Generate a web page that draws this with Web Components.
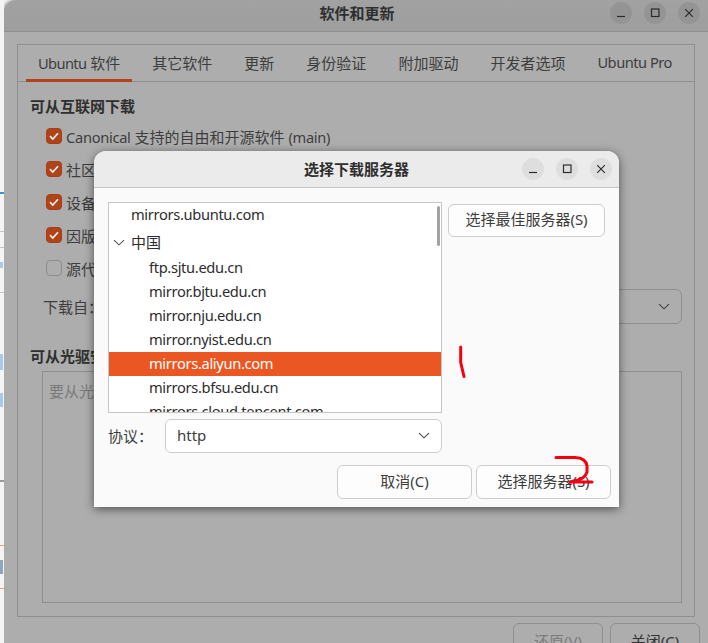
<!DOCTYPE html>
<html>
<head>
<meta charset="utf-8">
<title>软件和更新</title>
<style>
  html, body { margin: 0; height: 643px; overflow: hidden; background: #f4f4f4; }
  body { font: 15px "Noto Sans", "Noto Sans CJK SC", sans-serif; color: #3d3d3d; }
</style>
</head>
<body>

<desktop-screen>
  <main-window>
    <tab-bar>
      <tab-item active><lat-text narrow>Ubuntu</lat-text> 软件</tab-item>
      <tab-item>其它软件</tab-item>
      <tab-item>更新</tab-item>
      <tab-item>身份验证</tab-item>
      <tab-item>附加驱动</tab-item>
      <tab-item>开发者选项</tab-item>
      <tab-item><lat-text tight>Ubuntu Pro</lat-text></tab-item>
    </tab-bar>
    <section-title>可从互联网下载</section-title>
    <check-row checked><lat-text>Canonical</lat-text> 支持的自由和开源软件 <lat-text>(main)</lat-text></check-row>
    <check-row checked>社区</check-row>
    <check-row checked>设备</check-row>
    <check-row checked>因版</check-row>
    <check-row>源代</check-row>
    <download-row></download-row>
    <section-title second>可从光驱安</section-title>
    <cdrom-box>要从光</cdrom-box>
  </main-window>

  <mirror-dialog>
    <mirror-list></mirror-list>
  </mirror-dialog>

  <red-marks></red-marks>
</desktop-screen>

<script>
// shared bits
const chevron = `<svg width="12" height="8" viewBox="0 0 12 8"><path d="M1 1.2 6 5.8 11 1.2" fill="none" stroke="currentColor" stroke-width="1.1"/></svg>`;

class LatText extends HTMLElement {
  constructor() {
    super();
    this.attachShadow({ mode: 'open' });
    this.shadowRoot.innerHTML = `
      <style>
        :host { font-size: 14.67px; letter-spacing: -.3px; }
        :host([tight]) { letter-spacing: -.5px; }
        :host([narrow]) { letter-spacing: -.63px; }
      </style>
      <slot></slot>`;
  }
}

class DesktopScreen extends HTMLElement {
  constructor() {
    super();
    this.attachShadow({ mode: 'open' });
    this.shadowRoot.innerHTML = `
      <style>
        :host { display: flex; position: relative; width: 708px; height: 643px; overflow: hidden; }
        .strip { width: 4px; flex: none; position: relative; background: #f4f4f4; }
        .strip i { position: absolute; left: 0; width: 4px; height: 1px; background: #c4c4c4; }
        .strip i.blue { background: #3d8fdc; height: 2px; }
        .strip i.soft { background: #a9c9ea; width: 3px; }
        .strip i.red { background: #e8a08a; }
        ::slotted(main-window) { flex: 1; }
      </style>
      <div class="strip">
        <i class="blue" style="top:192px"></i>
        <i style="top:231px"></i><i style="top:247px"></i><i style="top:292px"></i>
        <i class="soft" style="top:262px;height:6px"></i>
        <i class="soft" style="top:354px;height:16px"></i>
        <i class="soft" style="top:393px;height:14px"></i>
        <i style="top:480px;height:2px;background:#9a9a9a"></i>
        <i class="red" style="top:545px"></i><i class="red" style="top:588px"></i>
        <i class="soft" style="top:560px;height:14px;background:#8fa6bd"></i>
      </div>
      <slot></slot>`;
  }
}

class WinControls extends HTMLElement {
  constructor() {
    super();
    this.attachShadow({ mode: 'open' });
    this.shadowRoot.innerHTML = `
      <style>
        :host { display: flex; gap: 12px; color: var(--ctl-fg, #2e2e2e); }
        span { width: 22px; height: 22px; border-radius: 50%; background: var(--ctl-bg, #dedede); display: flex; align-items: center; justify-content: center; }
        svg { width: 22px; height: 22px; }
      </style>
      <span><svg viewBox="0 0 22 22"><path d="M7 14.5h8" stroke="currentColor" stroke-width="1.2"/></svg></span>
      <span><svg viewBox="0 0 22 22"><rect x="7.5" y="7" width="7.5" height="7.5" fill="none" stroke="currentColor" stroke-width="1.2"/></svg></span>
      <span><svg viewBox="0 0 22 22"><path d="M7.2 7.2l7.6 7.6M14.8 7.2l-7.6 7.6" stroke="currentColor" stroke-width="1.2"/></svg></span>`;
  }
}

class MainWindow extends HTMLElement {
  constructor() {
    super();
    this.attachShadow({ mode: 'open' });
    this.shadowRoot.innerHTML = `
      <style>
        :host { display: block; height: 680px; background: #adadad; border-radius: 12px 0 0 0; box-shadow: -1px 0 4px rgba(0,0,0,.4); color: #3a3a3a; }
        header { height: 31px; box-sizing: content-box; border-bottom: 1px solid #8f8f8f; border-radius: 12px 0 0 0; background: linear-gradient(#a2a2a2, #9e9e9e); display: flex; align-items: center; justify-content: center; position: relative; font-weight: 700; color: #2f2f2f; --ctl-bg: #949494; --ctl-fg: #2b2b2b; }
        header span { margin: -7px 0 0 2px; }
        win-controls { position: absolute; right: 8px; top: 2px; }
        .book { margin: 12px 13px 0; height: 573px; box-sizing: border-box; border: 1px solid #8f8f8f; display: flex; flex-direction: column; }
        .actions { display: flex; justify-content: flex-end; gap: 7px; margin: 6px 8px 0 0; }
        .actions button { width: 90px; height: 34px; border: 1px solid #8f8f8f; border-radius: 6px; background: #adadad; font: inherit; color: #333; padding: 0; }
        .actions button[disabled] { color: #7c7c7c; }
      </style>
      <header><span>软件和更新</span><win-controls></win-controls></header>
      <div class="book"><slot></slot></div>
      <div class="actions"><button disabled>还原(V)</button><button>关闭(C)</button></div>`;
  }
}

class TabBar extends HTMLElement {
  constructor() {
    super();
    this.attachShadow({ mode: 'open' });
    this.shadowRoot.innerHTML = `
      <style>
        :host { display: flex; gap: 8px; height: 36px; padding-left: 8px; border-bottom: 1px solid #8f8f8f; }
      </style>
      <slot></slot>`;
  }
}

class TabItem extends HTMLElement {
  constructor() {
    super();
    this.attachShadow({ mode: 'open' });
    this.shadowRoot.innerHTML = `
      <style>
        :host { display: flex; align-items: center; padding: 0 12px; box-sizing: border-box; height: 37px; white-space: nowrap; border-bottom: 3px solid transparent; color: #3d3d3d; }
        :host([active]) { border-bottom-color: #b04318; }
      </style>
      <span><slot></slot></span>`;
  }
}

class SectionTitle extends HTMLElement {
  constructor() {
    super();
    this.attachShadow({ mode: 'open' });
    this.shadowRoot.innerHTML = `
      <style>
        :host { display: block; margin: 14px 12px 3px; height: 21px; line-height: 21px; font-weight: 700; color: #2f2f2f; white-space: nowrap; }
        :host([second]) { margin-top: 22px; margin-bottom: 4px; }
      </style>
      <slot></slot>`;
  }
}

class CheckRow extends HTMLElement {
  constructor() {
    super();
    this.attachShadow({ mode: 'open' });
    this.shadowRoot.innerHTML = `
      <style>
        :host { display: flex; align-items: center; height: 32px; margin: 0 0 1px 28px; white-space: nowrap; color: #3d3d3d; }
        .box { width: 16px; height: 16px; margin-right: 4px; box-sizing: border-box; border: 1px solid #8b8b8b; border-radius: 4px; flex: none; display: flex; align-items: center; justify-content: center; }
        :host([checked]) .box { background: #b04318; border-color: #a53f17; }
        svg { display: none; }
        :host([checked]) svg { display: block; }
      </style>
      <span class="box"><svg width="12" height="12" viewBox="0 0 12 12"><path d="M2 6.2 4.8 9 10 3.2" fill="none" stroke="#eee" stroke-width="1.7"/></svg></span>
      <span><slot></slot></span>`;
  }
}

class DownloadRow extends HTMLElement {
  constructor() {
    super();
    this.attachShadow({ mode: 'open' });
    this.shadowRoot.innerHTML = `
      <style>
        :host { display: flex; align-items: center; height: 35px; margin: 4px 12px 0 25px; color: #3d3d3d; }
        span { width: 60px; flex: none; }
        div { flex: 1; height: 35px; box-sizing: border-box; border: 1px solid #8f8f8f; border-radius: 6px; display: flex; align-items: center; justify-content: flex-end; padding-right: 11px; }
      </style>
      <span>下载自：</span>
      <div>${chevron}</div>`;
  }
}

class CdromBox extends HTMLElement {
  constructor() {
    super();
    this.attachShadow({ mode: 'open' });
    this.shadowRoot.innerHTML = `
      <style>
        :host { display: block; height: 232px; box-sizing: border-box; margin: 0 12px 0 24px; border: 1px solid #8f8f8f; padding: 8px 6px; color: #7a7a7a; }
      </style>
      <slot></slot>`;
  }
}

class PushButton extends HTMLElement {
  constructor() {
    super();
    this.attachShadow({ mode: 'open' });
    this.shadowRoot.innerHTML = `
      <style>
        :host { display: flex; align-items: center; justify-content: center; box-sizing: border-box; height: 34px; padding-bottom: 3px; border: 1px solid #cdcdcd; border-radius: 6px; background: #fdfdfd; color: #3d3d3d; white-space: nowrap; }
      </style>
      <slot></slot>`;
  }
}

class MirrorList extends HTMLElement {
  constructor() {
    super();
    const hosts = ['ftp.sjtu.edu.cn', 'mirror.bjtu.edu.cn', 'mirror.nju.edu.cn', 'mirror.nyist.edu.cn', 'mirrors.aliyun.com', 'mirrors.bfsu.edu.cn', 'mirrors.cloud.tencent.com'];
    const rows = hosts.map(h => `<div class="row host${h == 'mirrors.aliyun.com' ? ' sel' : ''}">${h}</div>`).join('');
    this.attachShadow({ mode: 'open' });
    this.shadowRoot.innerHTML = `
      <style>
        :host { display: block; position: relative; width: 334px; height: 211px; box-sizing: border-box; border: 1px solid #c6c6c6; background: #fff; overflow: hidden; color: #2d2d2d; font-size: 14.67px; letter-spacing: -.33px; }
        .row { height: 24px; line-height: 22px; padding-left: 22px; white-space: nowrap; }
        .top { height: 25px; }
        .group { height: 28px; box-sizing: border-box; padding-top: 1px; line-height: 26px; font-size: 15px; letter-spacing: 0; position: relative; }
        .group svg { position: absolute; left: 4px; top: 11px; color: #555; }
        .host { padding-left: 40px; }
        .sel { background: #eb5723; color: #fff; }
        .bar { position: absolute; right: 1px; top: 3px; width: 3px; height: 40px; border-radius: 2px; background: #a3a3a3; }
      </style>
      <div class="row top">mirrors.ubuntu.com</div>
      <div class="row group">${chevron}中国</div>
      ${rows}
      <div class="bar"></div>`;
  }
}

class MirrorDialog extends HTMLElement {
  constructor() {
    super();
    this.attachShadow({ mode: 'open' });
    this.shadowRoot.innerHTML = `
      <style>
        :host { display: block; position: absolute; left: 94px; top: 151px; width: 525px; height: 356px; background: #fafafa; border-radius: 12px 12px 0 0; box-shadow: 0 2px 10px rgba(0,0,0,.55); color: #3d3d3d; }
        header { height: 36px; border-bottom: 1px solid #c4c4c4; border-radius: 12px 12px 0 0; background: #ebebeb; display: flex; align-items: center; justify-content: center; position: relative; font-weight: 700; color: #2e2e2e; }
        header span { margin-top: -2px; }
        win-controls { position: absolute; right: 7px; top: 7px; }
        .upper { display: flex; gap: 6px; margin: 14px 14px 0; align-items: flex-start; }
        .upper push-button { width: 157px; height: 33px; margin-top: 2px; padding-bottom: 5px; }
        .proto { display: flex; align-items: center; margin: 6px 0 0 14px; width: 334px; height: 34px; }
        .proto span { width: 57px; flex: none; margin-top: -2px; }
        .proto div { flex: 1; height: 34px; box-sizing: border-box; border: 1px solid #cdcdcd; border-radius: 6px; background: #fff; display: flex; align-items: center; justify-content: space-between; padding: 0 11px 2px; }
        .proto svg { color: #444; margin-top: 2px; }
        .foot { display: flex; justify-content: flex-end; gap: 4px; margin: 12px 8px 0 0; }
        .foot push-button { width: 135px; }
      </style>
      <header><span>选择下载服务器</span><win-controls></win-controls></header>
      <div class="upper"><slot></slot><push-button>选择最佳服务器(S)</push-button></div>
      <div class="proto"><span>协议：</span><div>http ${chevron}</div></div>
      <div class="foot"><push-button>取消(C)</push-button><push-button>选择服务器(S)</push-button></div>`;
  }
}

// the two hand drawn annotations on top of the screenshot
class RedMarks extends HTMLElement {
  constructor() {
    super();
    this.attachShadow({ mode: 'open' });
    this.shadowRoot.innerHTML = `
      <style>
        :host { position: absolute; left: 0; top: 0; pointer-events: none; }
        svg { display: block; }
        path { fill: none; stroke: #f5000f; stroke-width: 3; stroke-linecap: round; stroke-linejoin: round; }
      </style>
      <svg width="708" height="643" viewBox="0 0 708 643">
        <path d="M460.7 347V362.5L464 376.5"/>
        <path d="M556 457.5H575Q586 458 587 466V472Q585 478 578 480L570 482H592"/>
      </svg>`;
  }
}

customElements.define('lat-text', LatText);
customElements.define('desktop-screen', DesktopScreen);
customElements.define('win-controls', WinControls);
customElements.define('main-window', MainWindow);
customElements.define('tab-bar', TabBar);
customElements.define('tab-item', TabItem);
customElements.define('section-title', SectionTitle);
customElements.define('check-row', CheckRow);
customElements.define('download-row', DownloadRow);
customElements.define('cdrom-box', CdromBox);
customElements.define('push-button', PushButton);
customElements.define('mirror-list', MirrorList);
customElements.define('mirror-dialog', MirrorDialog);
customElements.define('red-marks', RedMarks);
</script>
</body>
</html>
